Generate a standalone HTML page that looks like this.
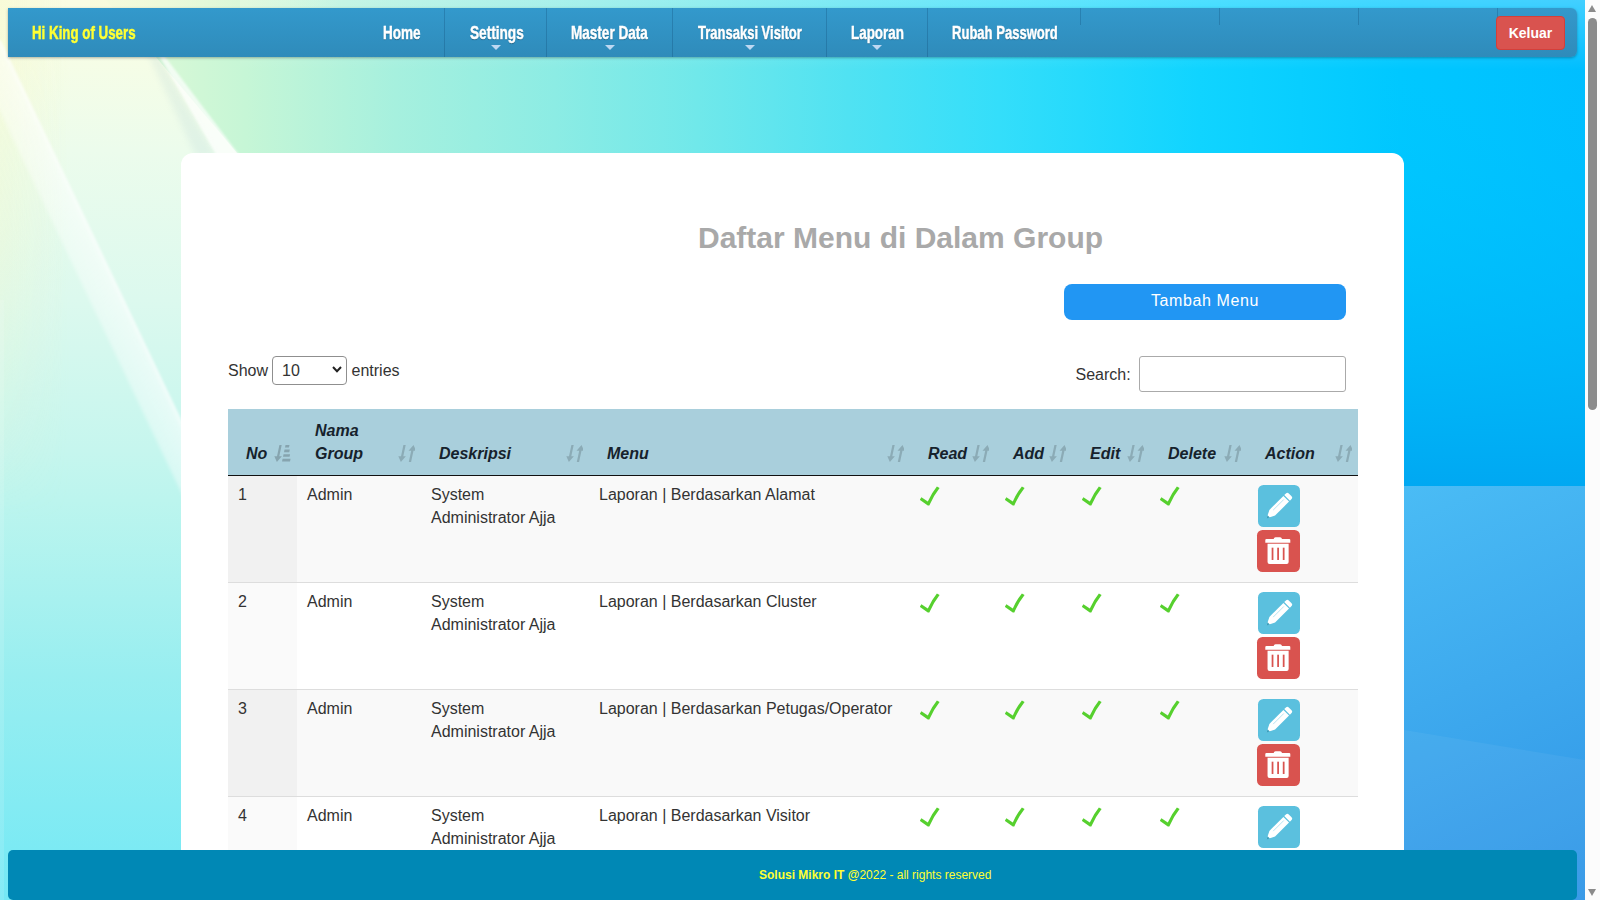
<!DOCTYPE html>
<html lang="id">
<head>
<meta charset="utf-8">
<title>Daftar Menu di Dalam Group</title>
<style>
*{box-sizing:border-box}
html,body{margin:0;padding:0}
html{width:1600px;height:900px;overflow:hidden}
body{position:relative;width:1600px;height:900px;overflow:hidden;font-family:"Liberation Sans",Arial,sans-serif;font-size:16px;color:#333;background:#7eeaf0}
/* ---------- background ---------- */
#bg{position:absolute;left:0;top:0;width:1585px;height:900px;z-index:0}
/* ---------- navbar ---------- */
#nav{position:absolute;left:8px;top:8px;width:1569px;height:49px;background:linear-gradient(#3399cc,#2f8bba);border-radius:0 6px 6px 0;box-shadow:0 1px 3px rgba(0,0,0,.3);z-index:5}
.nw{font-weight:bold;font-size:18.5px;line-height:49.6px;-webkit-text-stroke:.45px currentColor;white-space:nowrap;display:inline-block;transform-origin:0 50%;transform:scaleX(.715);text-shadow:0 1px 1px rgba(0,0,0,.35)}
#brand{position:absolute;left:24px;top:0;color:#ffff33;height:49px}
#brand .nw{text-shadow:none}
#menu{position:absolute;left:350px;top:0;height:49px;margin:0;padding:0;list-style:none}
#menu li{position:absolute;top:0;height:49px;border-left:1px solid rgba(10,60,100,.24);color:#fff}
#menu li:first-child{border-left:0}
#menu li.s{height:17px}
#menu li .nw{position:absolute;top:0}
#menu li i{position:absolute;top:37px;width:0;height:0;border:5px solid transparent;border-top-color:rgba(225,235,255,.8);margin-left:-5px}
#keluar{position:absolute;left:1488px;top:8px;width:69px;height:34px;background:#d9534f;border:1px solid #d43f3a;border-radius:4px;color:#fff;font-weight:bold;font-size:14px;line-height:32px;text-align:center}
/* ---------- card ---------- */
#card{position:absolute;left:181px;top:153px;width:1223px;height:760px;background:#fff;border-radius:12px 12px 0 0;z-index:1}
#title{position:absolute;left:517px;top:68px;margin:0;font-size:30px;font-weight:bold;color:#a9a9a9;white-space:nowrap;line-height:34px}
#tambah{position:absolute;left:883px;top:131px;width:282px;height:36px;background:#2196f3;border-radius:8px;color:#fff;font-size:16px;letter-spacing:.6px;text-align:center;line-height:33px}
#len{position:absolute;left:47px;top:203px;height:28px;line-height:30px;white-space:nowrap}
#len .sel{display:block;width:74.5px;height:28.5px;border:1px solid #8f8f8f;border-radius:4px;background:#fff;padding-left:9px;line-height:27.4px}
#search{position:absolute;left:894.5px;top:203px;height:36px;line-height:37px;white-space:nowrap}
#search .inp{position:absolute;left:63px;top:0;width:207px;height:36px;border:1px solid #aaa;border-radius:3px;background:#fff}
/* ---------- table ---------- */
#tbl{position:absolute;left:47px;top:256px;width:1130px;border-collapse:separate;border-spacing:0;table-layout:fixed}
#tbl th{background:#a9cfdc;height:67px;padding:0 0 9px 18px;text-align:left;vertical-align:bottom;font-weight:bold;font-style:italic;font-size:16px;line-height:22.857px;color:#16222c;border-bottom:1px solid #111;position:relative}
#tbl td{height:107px;padding:8px 10px 8px;vertical-align:top;line-height:22.857px;border-top:1px solid #ddd;background:#fff}
#tbl tr:first-child td{border-top:0;height:106px}
#tbl tr.odd td{background:#f9f9f9}
#tbl tr.odd td.s1{background:#f1f1f1}
#tbl tr.even td.s1{background:#fafafa}

#tbl th svg.so{position:absolute;right:6px;bottom:13px;width:18px;height:17px}
#tbl td svg.ck{display:block;width:20px;height:20px;margin-top:2px}
.ab{display:block;width:42px;height:42px;border-radius:5.5px;margin:1px 0 0 1px}
.ab svg{display:block;width:42px;height:42px}
.ab.e{background:#5bc0de}
.ab.d{background:#d9534f;width:43px;margin:3px 0 2px 0}
#len .t1{position:absolute;left:0;top:0}
#len .t2{position:absolute;left:123.5px;top:0}
#len .sel{position:absolute;left:44px;top:0}
#len .sel svg{position:absolute;right:4px;top:9px;width:10px;height:7px}
#foot span{position:absolute;left:751px;top:0;white-space:nowrap}
/* ---------- footer ---------- */
#foot{position:absolute;left:8px;top:850px;width:1569px;height:50px;background:#0088b5;border-radius:5px;z-index:6;color:#ffff33;font-size:12px;text-align:center;line-height:51px}
/* ---------- scrollbar ---------- */
#sb{position:absolute;left:1585px;top:0;width:15px;height:900px;background:#fcfcfc;z-index:9}
#sb .th{position:absolute;left:3px;top:18px;width:9px;height:392px;border-radius:5px;background:#8b8b8b}
#sb .up{position:absolute;left:3px;top:5px;width:0;height:0;border-left:4.5px solid transparent;border-right:4.5px solid transparent;border-bottom:7px solid #8b8b8b}
#sb .dn{position:absolute;left:3px;top:889px;width:0;height:0;border-left:4.5px solid transparent;border-right:4.5px solid transparent;border-top:7px solid #8b8b8b}
</style>
</head>
<body>
<svg id="bg" width="1585" height="900" viewBox="0 0 1585 900" preserveAspectRatio="none">
  <defs>
    <linearGradient id="gh" x1="0" y1="0" x2="1585" y2="0" gradientUnits="userSpaceOnUse">
      <stop offset="0" stop-color="#f4fce0"/>
      <stop offset=".10" stop-color="#d8f8d6"/>
      <stop offset=".155" stop-color="#c6f6d6"/>
      <stop offset=".25" stop-color="#a6f0de"/>
      <stop offset=".35" stop-color="#8cece4"/>
      <stop offset=".44" stop-color="#70e8ea"/>
      <stop offset=".535" stop-color="#50e2f2"/>
      <stop offset=".63" stop-color="#34defa"/>
      <stop offset=".757" stop-color="#10d4ff"/>
      <stop offset=".883" stop-color="#00c8ff"/>
      <stop offset="1" stop-color="#00beff"/>
    </linearGradient>
    <linearGradient id="gl" x1="0" y1="0" x2="0" y2="900" gradientUnits="userSpaceOnUse">
      <stop offset="0" stop-color="#fafde4"/>
      <stop offset=".063" stop-color="#f6fde6"/>
      <stop offset=".167" stop-color="#ecfcec"/>
      <stop offset=".333" stop-color="#dcf9ee"/>
      <stop offset=".5" stop-color="#c6f6ee"/>
      <stop offset=".556" stop-color="#bcf5ee"/>
      <stop offset=".75" stop-color="#98eef0"/>
      <stop offset=".944" stop-color="#7ceaf4"/>
      <stop offset="1" stop-color="#74e8f5"/>
    </linearGradient>
    <linearGradient id="gtop" x1="0" y1="0" x2="0" y2="70" gradientUnits="userSpaceOnUse">
      <stop offset="0" stop-color="#fff" stop-opacity=".26"/>
      <stop offset="1" stop-color="#fff" stop-opacity="0"/>
    </linearGradient>
    <linearGradient id="gt" x1="90" y1="0" x2="340" y2="0" gradientUnits="userSpaceOnUse">
      <stop offset="0" stop-color="#f8fbdc" stop-opacity=".95"/>
      <stop offset="1" stop-color="#f8fbdc" stop-opacity="0"/>
    </linearGradient>
    <linearGradient id="gy" x1="0" y1="0" x2="70" y2="0" gradientUnits="userSpaceOnUse">
      <stop offset="0" stop-color="#f6f8c8" stop-opacity=".42"/>
      <stop offset="1" stop-color="#f6f8c8" stop-opacity="0"/>
    </linearGradient>
    <linearGradient id="gyv" x1="0" y1="0" x2="0" y2="520" gradientUnits="userSpaceOnUse">
      <stop offset="0" stop-color="#fff" stop-opacity="1"/>
      <stop offset=".45" stop-color="#fff" stop-opacity=".8"/>
      <stop offset="1" stop-color="#fff" stop-opacity="0"/>
    </linearGradient>
    <mask id="my"><rect x="0" y="0" width="80" height="520" fill="url(#gyv)"/></mask>
    <linearGradient id="gbm" x1="16" y1="150" x2="47" y2="135.25" gradientUnits="userSpaceOnUse">
      <stop offset="0" stop-color="#fff" stop-opacity="0"/>
      <stop offset=".12" stop-color="#fff" stop-opacity=".38"/>
      <stop offset=".8" stop-color="#fff" stop-opacity=".52"/>
      <stop offset=".95" stop-color="#fff" stop-opacity=".72"/>
      <stop offset="1" stop-color="#fff" stop-opacity="0"/>
    </linearGradient>
    <linearGradient id="gr" x1="0" y1="57" x2="0" y2="486" gradientUnits="userSpaceOnUse">
      <stop offset="0" stop-color="#00c8ff" stop-opacity="0"/>
      <stop offset="1" stop-color="#00a8f2"/>
    </linearGradient>
    <linearGradient id="gb" x1="1404" y1="486" x2="1585" y2="900" gradientUnits="userSpaceOnUse">
      <stop offset="0" stop-color="#4abcf5"/>
      <stop offset="1" stop-color="#3095e6"/>
    </linearGradient>
    <linearGradient id="ge" x1="0" y1="0" x2="1" y2="0">
      <stop offset="0" stop-color="#fff" stop-opacity="0"/>
      <stop offset=".75" stop-color="#fff" stop-opacity=".9"/>
      <stop offset="1" stop-color="#fff" stop-opacity="0"/>
    </linearGradient>
    <filter id="b3" x="-20%" y="-20%" width="140%" height="140%"><feGaussianBlur stdDeviation="3"/></filter>
    <filter id="b1" x="-20%" y="-20%" width="140%" height="140%"><feGaussianBlur stdDeviation="1.2"/></filter>
  </defs>
  <rect width="1585" height="900" fill="url(#gh)"/>
  <!-- pale zone left of the thin edge -->
  <polygon points="0,0 106,0 150,50 237,153 500,470 500,900 0,900" fill="url(#gl)"/>
  <rect x="240" y="0" width="1345" height="70" fill="url(#gtop)"/>
  <rect x="90" y="0" width="250" height="9" fill="url(#gt)"/>
  <!-- thin bright edge -->
  <polygon points="146,50 156,50 216,156 196,156" fill="#9fc4cc" opacity=".16" filter="url(#b3)"/>
  <polygon points="156,50 160,50 240,156 217,156" fill="#ffffff" opacity=".7" filter="url(#b1)"/>
  <!-- big beam -->
  <rect x="0" y="0" width="80" height="520" fill="url(#gy)" mask="url(#my)"/>
  <polygon points="-36.4,40 1.6,40 249.2,560 211.2,560" fill="url(#gbm)" filter="url(#b1)"/>
  <rect x="0" y="300" width="4" height="600" fill="#fff" opacity=".12"/>
  <!-- right column -->
  <rect x="1380" y="57" width="205" height="429" fill="url(#gr)"/>
  <rect x="1380" y="486" width="205" height="414" fill="url(#gb)"/>
  <polygon points="1380,726 1585,760 1585,900 1380,900" fill="#ffffff" opacity=".05"/>
</svg>

<div id="nav">
  <div id="brand"><span class="nw" style="transform:scaleX(.72)">Hi King of Users</span></div>
  <ul id="menu">
    <li style="left:0;width:86px"><span class="nw" style="left:25.2px;transform:scaleX(.73)">Home</span></li>
    <li style="left:86px;width:102px"><span class="nw" style="left:24.5px;transform:scaleX(.736)">Settings</span><i style="left:51px"></i></li>
    <li style="left:188px;width:126px"><span class="nw" style="left:24.2px;transform:scaleX(.732)">Master Data</span><i style="left:63px"></i></li>
    <li style="left:314px;width:154px"><span class="nw" style="left:25px;transform:scaleX(.703)">Transaksi Visitor</span><i style="left:77px"></i></li>
    <li style="left:468px;width:101px"><span class="nw" style="left:23.7px;transform:scaleX(.7255)">Laporan</span><i style="left:50px"></i></li>
    <li style="left:569px;width:153px"><span class="nw" style="left:23.5px;transform:scaleX(.705)">Rubah Password</span></li>
    <li class="s" style="left:722px;width:139px"></li>
    <li class="s" style="left:861px;width:139px"></li>
    <li class="s" style="left:1000px;width:139px"></li>
    <li class="s" style="left:1139px;width:60px"></li>
  </ul>
  <div id="keluar">Keluar</div>
</div>

<div id="card">
  <h2 id="title">Daftar Menu di Dalam Group</h2>
  <div id="tambah">Tambah Menu</div>
  <div id="len"><span class="t1">Show</span><span class="sel">10<svg viewBox="0 0 10 7"><path d="M1 1 L5 5.2 L9 1" fill="none" stroke="#222" stroke-width="2"/></svg></span><span class="t2">entries</span></div>
  <div id="search">Search:<span class="inp"></span></div>
  <table id="tbl">
    <colgroup><col style="width:69px"><col style="width:124px"><col style="width:168px"><col style="width:321px"><col style="width:85px"><col style="width:77px"><col style="width:78px"><col style="width:97px"><col style="width:111px"></colgroup>
    <thead><tr><th>No<svg class="so" viewBox="0 0 18 17"><g fill="#000" opacity=".2" transform="skewX(-12) translate(3.5 0)"><path d="M2.9 0h2.3v11.3h2.6l-3.8 5.7l-3.8-5.7h2.7z"/><path d="M9 0h4v2.6H9zM9 4.6h5.3v2.6H9zM9 9.2h6.6v2.6H9zM9 13.8h8v2.6H9z"/></g></svg></th><th>Nama<br>Group<svg class="so" viewBox="0 0 18 17"><g fill="#000" opacity=".17" transform="skewX(-12) translate(3.5 0)"><path d="M2.9 0h2.3v11.3h2.6l-3.8 5.7l-3.8-5.7h2.7z"/><path d="M11.9 17h2.3V5.7h2.6l-3.8-5.7l-3.8 5.7h2.7z"/></g></svg></th><th>Deskripsi<svg class="so" viewBox="0 0 18 17"><g fill="#000" opacity=".17" transform="skewX(-12) translate(3.5 0)"><path d="M2.9 0h2.3v11.3h2.6l-3.8 5.7l-3.8-5.7h2.7z"/><path d="M11.9 17h2.3V5.7h2.6l-3.8-5.7l-3.8 5.7h2.7z"/></g></svg></th><th>Menu<svg class="so" viewBox="0 0 18 17"><g fill="#000" opacity=".17" transform="skewX(-12) translate(3.5 0)"><path d="M2.9 0h2.3v11.3h2.6l-3.8 5.7l-3.8-5.7h2.7z"/><path d="M11.9 17h2.3V5.7h2.6l-3.8-5.7l-3.8 5.7h2.7z"/></g></svg></th><th>Read<svg class="so" viewBox="0 0 18 17"><g fill="#000" opacity=".17" transform="skewX(-12) translate(3.5 0)"><path d="M2.9 0h2.3v11.3h2.6l-3.8 5.7l-3.8-5.7h2.7z"/><path d="M11.9 17h2.3V5.7h2.6l-3.8-5.7l-3.8 5.7h2.7z"/></g></svg></th><th>Add<svg class="so" viewBox="0 0 18 17"><g fill="#000" opacity=".17" transform="skewX(-12) translate(3.5 0)"><path d="M2.9 0h2.3v11.3h2.6l-3.8 5.7l-3.8-5.7h2.7z"/><path d="M11.9 17h2.3V5.7h2.6l-3.8-5.7l-3.8 5.7h2.7z"/></g></svg></th><th>Edit<svg class="so" viewBox="0 0 18 17"><g fill="#000" opacity=".17" transform="skewX(-12) translate(3.5 0)"><path d="M2.9 0h2.3v11.3h2.6l-3.8 5.7l-3.8-5.7h2.7z"/><path d="M11.9 17h2.3V5.7h2.6l-3.8-5.7l-3.8 5.7h2.7z"/></g></svg></th><th>Delete<svg class="so" viewBox="0 0 18 17"><g fill="#000" opacity=".17" transform="skewX(-12) translate(3.5 0)"><path d="M2.9 0h2.3v11.3h2.6l-3.8 5.7l-3.8-5.7h2.7z"/><path d="M11.9 17h2.3V5.7h2.6l-3.8-5.7l-3.8 5.7h2.7z"/></g></svg></th><th>Action<svg class="so" viewBox="0 0 18 17"><g fill="#000" opacity=".17" transform="skewX(-12) translate(3.5 0)"><path d="M2.9 0h2.3v11.3h2.6l-3.8 5.7l-3.8-5.7h2.7z"/><path d="M11.9 17h2.3V5.7h2.6l-3.8-5.7l-3.8 5.7h2.7z"/></g></svg></th></tr></thead>
    <tbody>
      <tr class="odd"><td class="s1">1</td><td>Admin</td><td>System Administrator Ajja</td><td>Laporan | Berdasarkan Alamat</td><td><svg class="ck" viewBox="0 0 20 20"><path d="M1.4 11.2L7.8 15.4Q11.6 7 16.9 .5L19.6 2Q13.6 9.6 9.3 19.4L7.8 19.6L-.2 13.8Z" fill="#56d02e"/></svg></td><td><svg class="ck" viewBox="0 0 20 20"><path d="M1.4 11.2L7.8 15.4Q11.6 7 16.9 .5L19.6 2Q13.6 9.6 9.3 19.4L7.8 19.6L-.2 13.8Z" fill="#56d02e"/></svg></td><td><svg class="ck" viewBox="0 0 20 20"><path d="M1.4 11.2L7.8 15.4Q11.6 7 16.9 .5L19.6 2Q13.6 9.6 9.3 19.4L7.8 19.6L-.2 13.8Z" fill="#56d02e"/></svg></td><td><svg class="ck" viewBox="0 0 20 20"><path d="M1.4 11.2L7.8 15.4Q11.6 7 16.9 .5L19.6 2Q13.6 9.6 9.3 19.4L7.8 19.6L-.2 13.8Z" fill="#56d02e"/></svg></td><td class="ac"><span class="ab e"><svg viewBox="0 0 42 42"><g transform="translate(21 21) rotate(45)" fill="#fff"><path d="M-4 -11.4h8v-2.4a2 2 0 0 0-2-2h-4a2 2 0 0 0-2 2z"/><path d="M-4 -10.2h8V9.6L0 17.4L-4 9.6z"/><path d="M-1.2 -8v15" stroke="#5bc0de" stroke-width=".7" opacity=".6"/><path d="M-1.6 14.6L0 17.6L1.6 14.6z" fill="#3a9fbd"/></g></svg></span><span class="ab d"><svg viewBox="0 0 43 42"><g fill="#fff"><path d="M8.5 12.6V9.8q0-1.2 1.2-1.2H17q.4-1.7 2-1.7h4.6q1.6 0 2 1.7h7.3q1.2 0 1.2 1.2v2.8z"/><path d="M10.8 13.6h21.6v18.6q0 2-2 2H12.8q-2 0-2-2z"/></g><g fill="#d9534f"><rect x="15" y="17.6" width="1.8" height="12.6"/><rect x="20.7" y="17.6" width="1.8" height="12.6"/><rect x="26.4" y="17.6" width="1.8" height="12.6"/></g></svg></span></td></tr>
      <tr class="even"><td class="s1">2</td><td>Admin</td><td>System Administrator Ajja</td><td>Laporan | Berdasarkan Cluster</td><td><svg class="ck" viewBox="0 0 20 20"><path d="M1.4 11.2L7.8 15.4Q11.6 7 16.9 .5L19.6 2Q13.6 9.6 9.3 19.4L7.8 19.6L-.2 13.8Z" fill="#56d02e"/></svg></td><td><svg class="ck" viewBox="0 0 20 20"><path d="M1.4 11.2L7.8 15.4Q11.6 7 16.9 .5L19.6 2Q13.6 9.6 9.3 19.4L7.8 19.6L-.2 13.8Z" fill="#56d02e"/></svg></td><td><svg class="ck" viewBox="0 0 20 20"><path d="M1.4 11.2L7.8 15.4Q11.6 7 16.9 .5L19.6 2Q13.6 9.6 9.3 19.4L7.8 19.6L-.2 13.8Z" fill="#56d02e"/></svg></td><td><svg class="ck" viewBox="0 0 20 20"><path d="M1.4 11.2L7.8 15.4Q11.6 7 16.9 .5L19.6 2Q13.6 9.6 9.3 19.4L7.8 19.6L-.2 13.8Z" fill="#56d02e"/></svg></td><td class="ac"><span class="ab e"><svg viewBox="0 0 42 42"><g transform="translate(21 21) rotate(45)" fill="#fff"><path d="M-4 -11.4h8v-2.4a2 2 0 0 0-2-2h-4a2 2 0 0 0-2 2z"/><path d="M-4 -10.2h8V9.6L0 17.4L-4 9.6z"/><path d="M-1.2 -8v15" stroke="#5bc0de" stroke-width=".7" opacity=".6"/><path d="M-1.6 14.6L0 17.6L1.6 14.6z" fill="#3a9fbd"/></g></svg></span><span class="ab d"><svg viewBox="0 0 43 42"><g fill="#fff"><path d="M8.5 12.6V9.8q0-1.2 1.2-1.2H17q.4-1.7 2-1.7h4.6q1.6 0 2 1.7h7.3q1.2 0 1.2 1.2v2.8z"/><path d="M10.8 13.6h21.6v18.6q0 2-2 2H12.8q-2 0-2-2z"/></g><g fill="#d9534f"><rect x="15" y="17.6" width="1.8" height="12.6"/><rect x="20.7" y="17.6" width="1.8" height="12.6"/><rect x="26.4" y="17.6" width="1.8" height="12.6"/></g></svg></span></td></tr>
      <tr class="odd"><td class="s1">3</td><td>Admin</td><td>System Administrator Ajja</td><td>Laporan | Berdasarkan Petugas/Operator</td><td><svg class="ck" viewBox="0 0 20 20"><path d="M1.4 11.2L7.8 15.4Q11.6 7 16.9 .5L19.6 2Q13.6 9.6 9.3 19.4L7.8 19.6L-.2 13.8Z" fill="#56d02e"/></svg></td><td><svg class="ck" viewBox="0 0 20 20"><path d="M1.4 11.2L7.8 15.4Q11.6 7 16.9 .5L19.6 2Q13.6 9.6 9.3 19.4L7.8 19.6L-.2 13.8Z" fill="#56d02e"/></svg></td><td><svg class="ck" viewBox="0 0 20 20"><path d="M1.4 11.2L7.8 15.4Q11.6 7 16.9 .5L19.6 2Q13.6 9.6 9.3 19.4L7.8 19.6L-.2 13.8Z" fill="#56d02e"/></svg></td><td><svg class="ck" viewBox="0 0 20 20"><path d="M1.4 11.2L7.8 15.4Q11.6 7 16.9 .5L19.6 2Q13.6 9.6 9.3 19.4L7.8 19.6L-.2 13.8Z" fill="#56d02e"/></svg></td><td class="ac"><span class="ab e"><svg viewBox="0 0 42 42"><g transform="translate(21 21) rotate(45)" fill="#fff"><path d="M-4 -11.4h8v-2.4a2 2 0 0 0-2-2h-4a2 2 0 0 0-2 2z"/><path d="M-4 -10.2h8V9.6L0 17.4L-4 9.6z"/><path d="M-1.2 -8v15" stroke="#5bc0de" stroke-width=".7" opacity=".6"/><path d="M-1.6 14.6L0 17.6L1.6 14.6z" fill="#3a9fbd"/></g></svg></span><span class="ab d"><svg viewBox="0 0 43 42"><g fill="#fff"><path d="M8.5 12.6V9.8q0-1.2 1.2-1.2H17q.4-1.7 2-1.7h4.6q1.6 0 2 1.7h7.3q1.2 0 1.2 1.2v2.8z"/><path d="M10.8 13.6h21.6v18.6q0 2-2 2H12.8q-2 0-2-2z"/></g><g fill="#d9534f"><rect x="15" y="17.6" width="1.8" height="12.6"/><rect x="20.7" y="17.6" width="1.8" height="12.6"/><rect x="26.4" y="17.6" width="1.8" height="12.6"/></g></svg></span></td></tr>
      <tr class="even"><td class="s1">4</td><td>Admin</td><td>System Administrator Ajja</td><td>Laporan | Berdasarkan Visitor</td><td><svg class="ck" viewBox="0 0 20 20"><path d="M1.4 11.2L7.8 15.4Q11.6 7 16.9 .5L19.6 2Q13.6 9.6 9.3 19.4L7.8 19.6L-.2 13.8Z" fill="#56d02e"/></svg></td><td><svg class="ck" viewBox="0 0 20 20"><path d="M1.4 11.2L7.8 15.4Q11.6 7 16.9 .5L19.6 2Q13.6 9.6 9.3 19.4L7.8 19.6L-.2 13.8Z" fill="#56d02e"/></svg></td><td><svg class="ck" viewBox="0 0 20 20"><path d="M1.4 11.2L7.8 15.4Q11.6 7 16.9 .5L19.6 2Q13.6 9.6 9.3 19.4L7.8 19.6L-.2 13.8Z" fill="#56d02e"/></svg></td><td><svg class="ck" viewBox="0 0 20 20"><path d="M1.4 11.2L7.8 15.4Q11.6 7 16.9 .5L19.6 2Q13.6 9.6 9.3 19.4L7.8 19.6L-.2 13.8Z" fill="#56d02e"/></svg></td><td class="ac"><span class="ab e"><svg viewBox="0 0 42 42"><g transform="translate(21 21) rotate(45)" fill="#fff"><path d="M-4 -11.4h8v-2.4a2 2 0 0 0-2-2h-4a2 2 0 0 0-2 2z"/><path d="M-4 -10.2h8V9.6L0 17.4L-4 9.6z"/><path d="M-1.2 -8v15" stroke="#5bc0de" stroke-width=".7" opacity=".6"/><path d="M-1.6 14.6L0 17.6L1.6 14.6z" fill="#3a9fbd"/></g></svg></span><span class="ab d"><svg viewBox="0 0 43 42"><g fill="#fff"><path d="M8.5 12.6V9.8q0-1.2 1.2-1.2H17q.4-1.7 2-1.7h4.6q1.6 0 2 1.7h7.3q1.2 0 1.2 1.2v2.8z"/><path d="M10.8 13.6h21.6v18.6q0 2-2 2H12.8q-2 0-2-2z"/></g><g fill="#d9534f"><rect x="15" y="17.6" width="1.8" height="12.6"/><rect x="20.7" y="17.6" width="1.8" height="12.6"/><rect x="26.4" y="17.6" width="1.8" height="12.6"/></g></svg></span></td></tr>
    </tbody>
  </table>
</div>

<div id="foot"><span><b>Solusi Mikro IT @</b>2022 - all rights reserved</span></div>

<div id="sb"><div class="up"></div><div class="th"></div><div class="dn"></div></div>
</body>
</html>
